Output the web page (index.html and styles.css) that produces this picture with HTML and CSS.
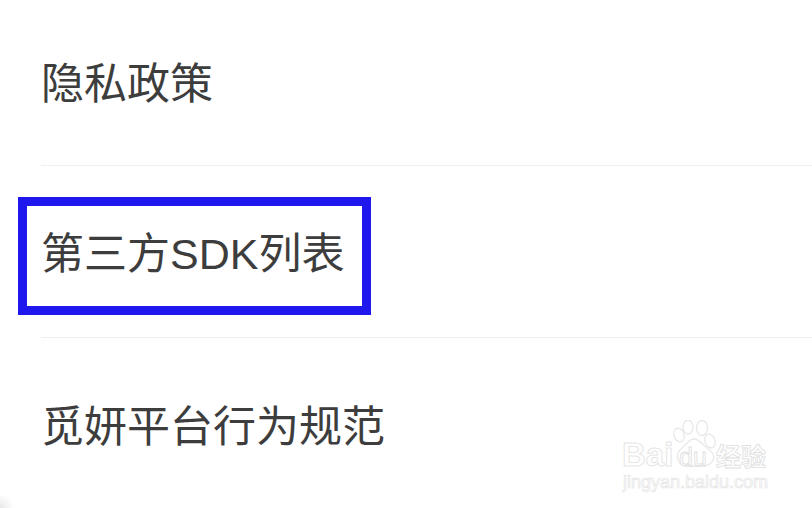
FILE: index.html
```html
<!DOCTYPE html>
<html lang="zh-CN">
<head>
<meta charset="utf-8">
<title>设置</title>
<link rel="stylesheet" href="styles.css">
</head>
<body>
<main class="list">
  <div class="row"><span class="label">隐私政策</span></div>
  <div class="row"><span class="label">第三方SDK列表</span><span class="mark"></span></div>
  <div class="row"><span class="label">觅妍平台行为规范</span></div>
</main>
<div class="corner"></div>
<aside class="watermark">
  <svg class="paw" width="46" height="50" viewBox="0 0 46 50" aria-hidden="true">
    <g fill="#fff" stroke="#e8e8e8" stroke-width="1.3">
      <ellipse cx="7" cy="15" rx="5" ry="7" transform="rotate(-20 7 15)"/>
      <ellipse cx="16" cy="7" rx="5" ry="7"/>
      <ellipse cx="30" cy="8" rx="5.5" ry="7.5"/>
      <ellipse cx="38" cy="21" rx="5" ry="7" transform="rotate(-20 38 21)"/>
      <path d="M22 19c-5 0-7 5-11 8-5 4-7 8-5 13 2 6 8 7 16 6 9 1 17 0 19-6 2-5-1-9-6-12-5-3-7-9-13-9z"/>
    </g>
  </svg>
  <div class="brand"><span class="bai">Bai</span><span class="du">du</span><span class="jy">经验</span></div>
  <div class="url">jingyan.baidu.com</div>
</aside>
</body>
</html>
```
FILE: styles.css
```css
html, body {
  margin: 0;
  padding: 0;
  background: #fff;
}
body {
  width: 812px;
  height: 508px;
  position: relative;
  font-family: "Liberation Sans", "Noto Sans CJK SC", sans-serif;
}
.list {
  display: flex;
  flex-direction: column;
  padding-left: 41px;
}
.row {
  position: relative;
  box-sizing: border-box;
  height: 172px;
  display: flex;
  align-items: center;
  padding-top: 5px;
  border-bottom: 1px solid #f0f0f0;
}
.row:first-child {
  height: 166px;
  padding-top: 3px;
}
.row:last-child {
  height: 170px;
  padding-top: 7px;
  border-bottom: 0;
}
.label {
  font-size: 43px;
  line-height: 50px;
  color: #3d3d3d;
}
.mark {
  position: absolute;
  left: -23px;
  top: 31px;
  width: 353px;
  height: 118px;
  box-sizing: border-box;
  border: 9px solid #2017ee;
}
.corner {
  position: absolute;
  left: 0;
  bottom: 0;
  width: 14px;
  height: 14px;
  background: radial-gradient(circle at 0 100%, #e8e8e8, rgba(255, 255, 255, 0) 72%);
}
.watermark {
  position: absolute;
  left: 622px;
  top: 420px;
  width: 150px;
  height: 72px;
}
.paw {
  position: absolute;
  left: 50px;
  top: 0;
}
.brand {
  position: absolute;
  left: 0;
  top: 18px;
  display: flex;
  align-items: baseline;
  line-height: 34px;
}
.bai {
  font-size: 33px;
  font-weight: 700;
  color: #fff;
  -webkit-text-stroke: 1px #e6e6e6;
  width: 57px;
}
.du {
  position: relative;
  font-size: 25px;
  color: #fff;
  -webkit-text-stroke: 0.8px #dedede;
  width: 37px;
}
.jy {
  font-size: 25px;
  font-weight: 700;
  color: #fff;
  -webkit-text-stroke: 0.8px #e0e0e0;
}
.url {
  position: absolute;
  left: 1px;
  top: 51px;
  font-size: 18px;
  line-height: 22px;
  color: #fff;
  -webkit-text-stroke: 0.7px #e4e4e4;
  white-space: nowrap;
}
```
